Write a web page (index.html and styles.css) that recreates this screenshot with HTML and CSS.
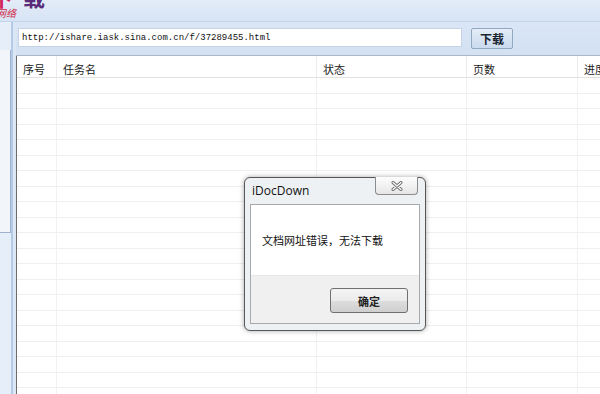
FILE: index.html
```html
<!DOCTYPE html>
<html>
<head>
  <meta charset="utf-8">
  <title>iDocDown</title>
  <link rel="stylesheet" href="styles.css">
</head>
<body>
  <div class="banner">
    <span class="logo-title"><span class="logo-xia">下</span><span class="logo-zai">载</span></span>
    <span class="logo-sub">网络</span>
  </div>
  <div class="main">
    <div class="sidebar">
      <div class="side-box"></div>
    </div>
    <div class="content">
      <div class="toolbar">
        <div class="url-input">http://ishare.iask.sina.com.cn/f/37289455.html</div>
        <button class="btn-download">下载</button>
      </div>
      <div class="grid">
        <div class="row head">
          <div class="c c1">序号</div>
          <div class="c c2">任务名</div>
          <div class="c c3">状态</div>
          <div class="c c4">页数</div>
          <div class="c c5">进度</div>
        </div>
        <div class="row"><div class="c c1"></div><div class="c c2"></div><div class="c c3"></div><div class="c c4"></div><div class="c c5"></div></div>
        <div class="row"><div class="c c1"></div><div class="c c2"></div><div class="c c3"></div><div class="c c4"></div><div class="c c5"></div></div>
        <div class="row"><div class="c c1"></div><div class="c c2"></div><div class="c c3"></div><div class="c c4"></div><div class="c c5"></div></div>
        <div class="row"><div class="c c1"></div><div class="c c2"></div><div class="c c3"></div><div class="c c4"></div><div class="c c5"></div></div>
        <div class="row"><div class="c c1"></div><div class="c c2"></div><div class="c c3"></div><div class="c c4"></div><div class="c c5"></div></div>
        <div class="row"><div class="c c1"></div><div class="c c2"></div><div class="c c3"></div><div class="c c4"></div><div class="c c5"></div></div>
        <div class="row"><div class="c c1"></div><div class="c c2"></div><div class="c c3"></div><div class="c c4"></div><div class="c c5"></div></div>
        <div class="row"><div class="c c1"></div><div class="c c2"></div><div class="c c3"></div><div class="c c4"></div><div class="c c5"></div></div>
        <div class="row"><div class="c c1"></div><div class="c c2"></div><div class="c c3"></div><div class="c c4"></div><div class="c c5"></div></div>
        <div class="row"><div class="c c1"></div><div class="c c2"></div><div class="c c3"></div><div class="c c4"></div><div class="c c5"></div></div>
        <div class="row"><div class="c c1"></div><div class="c c2"></div><div class="c c3"></div><div class="c c4"></div><div class="c c5"></div></div>
        <div class="row"><div class="c c1"></div><div class="c c2"></div><div class="c c3"></div><div class="c c4"></div><div class="c c5"></div></div>
        <div class="row"><div class="c c1"></div><div class="c c2"></div><div class="c c3"></div><div class="c c4"></div><div class="c c5"></div></div>
        <div class="row"><div class="c c1"></div><div class="c c2"></div><div class="c c3"></div><div class="c c4"></div><div class="c c5"></div></div>
        <div class="row"><div class="c c1"></div><div class="c c2"></div><div class="c c3"></div><div class="c c4"></div><div class="c c5"></div></div>
        <div class="row"><div class="c c1"></div><div class="c c2"></div><div class="c c3"></div><div class="c c4"></div><div class="c c5"></div></div>
        <div class="row"><div class="c c1"></div><div class="c c2"></div><div class="c c3"></div><div class="c c4"></div><div class="c c5"></div></div>
        <div class="row"><div class="c c1"></div><div class="c c2"></div><div class="c c3"></div><div class="c c4"></div><div class="c c5"></div></div>
        <div class="row"><div class="c c1"></div><div class="c c2"></div><div class="c c3"></div><div class="c c4"></div><div class="c c5"></div></div>
        <div class="row"><div class="c c1"></div><div class="c c2"></div><div class="c c3"></div><div class="c c4"></div><div class="c c5"></div></div>
        <div class="row"><div class="c c1"></div><div class="c c2"></div><div class="c c3"></div><div class="c c4"></div><div class="c c5"></div></div>
      </div>
    </div>
  </div>

  <!-- message box -->
  <div class="dialog">
    <div class="dialog-title">iDocDown</div>
    <div class="dialog-close">
      <svg width="12" height="10" viewBox="0 0 12 10">
        <path d="M2 1.5 L10 8.5 M10 1.5 L2 8.5" stroke="#6b6b6b" stroke-width="3" stroke-linecap="round" fill="none"/>
        <path d="M2 1.5 L10 8.5 M10 1.5 L2 8.5" stroke="#fff" stroke-width="1.2" stroke-linecap="round" fill="none"/>
      </svg>
    </div>
    <div class="dialog-body">
      <div class="dialog-msg">文档网址错误，无法下载</div>
      <div class="dialog-foot">
        <button class="btn-ok">确定</button>
      </div>
    </div>
  </div>
</body>
</html>
```

FILE: styles.css
```css
body {
  margin: 0;
  height: 394px;
  overflow: hidden;
  background-color: #d9e5f4;
  font-family: "Noto Sans CJK SC", "Noto Sans", sans-serif;
}

.banner {
  position: relative;
  height: 21px;
  overflow: hidden;
  background: linear-gradient(#e3ecf8, #d7e4f4);
  border-bottom: 1px solid #c3d4ea;
}

.logo-title {
  position: absolute;
  left: -9px;
  top: -19px;
  font-size: 22px;
  line-height: 30px;
  font-weight: bold;
  letter-spacing: 10px;
}

.logo-xia {
  color: #d0265c;
}

.logo-zai {
  color: #5a2a7a;
}

.logo-sub {
  position: absolute;
  left: -4px;
  top: 7px;
  font-size: 10px;
  line-height: 12px;
  font-style: italic;
  color: #d02a4a;
}

.main {
  display: flex;
  height: 372px;
}

.sidebar {
  flex-shrink: 0;
  width: 16px;
  background: linear-gradient(90deg, #e6eef9 0, #e6eef9 11px, #b4cbe7 11px, #b4cbe7 13px, #dce7f5 13px);
}

.side-box {
  width: 10px;
  height: 182px;
  margin-top: 28px;
  background-color: #f2f6fb;
  border-right: 1px solid #9fb2cb;
  border-bottom: 1px solid #9fb2cb;
}

.content {
  flex: 1;
  min-width: 0;
  display: flex;
  flex-direction: column;
}

.toolbar {
  display: flex;
  align-items: flex-start;
  height: 34px;
  padding: 6px 0 0 2px;
  box-sizing: border-box;
  background: linear-gradient(#dae6f6, #d3e1f3);
  border-bottom: 1px solid #a7b6c9;
}

.url-input {
  flex-shrink: 0;
  width: 444px;
  height: 19px;
  box-sizing: border-box;
  padding: 3px 0 0 3px;
  background-color: #fff;
  border: 1px solid #c5d3e4;
  font-family: "Liberation Mono", monospace;
  font-size: 9px;
  line-height: 12px;
  color: #111;
  white-space: nowrap;
}

.btn-download {
  flex-shrink: 0;
  width: 42px;
  height: 21px;
  margin-left: 9px;
  padding: 0;
  border: 1px solid #95a8c2;
  border-radius: 2px;
  background: linear-gradient(#e4edf8, #cbdaee);
  font-family: "Noto Sans CJK SC", sans-serif;
  font-size: 12px;
  font-weight: bold;
  color: #1c2633;
}

.grid {
  flex: 1;
  overflow: hidden;
  background-color: #fff;
  border-left: 1px solid #6d6d6d;
}

.row {
  display: flex;
  height: 15.5px;
  border-bottom: 1px solid #efefef;
  box-sizing: border-box;
}

.row.head {
  height: 22px;
  border-bottom: 1px solid #e2e2e2;
  font-size: 11px;
  color: #222;
}

.c {
  flex-shrink: 0;
  box-sizing: border-box;
  border-right: 1px solid #f1f1f1;
  white-space: nowrap;
  overflow: hidden;
}

.head .c {
  padding: 6px 0 0 6px;
  line-height: 14px;
  border-right-color: #ececec;
}

.c1 { width: 40px; }
.c2 { width: 260px; }
.c3 { width: 150px; }
.c4 { width: 111px; }
.c5 { flex: 1; border-right: none; }

.dialog {
  position: absolute;
  left: 244px;
  top: 177px;
  width: 182px;
  height: 154px;
  box-sizing: border-box;
  padding: 0 5px 6px 5px;
  background-color: #eef1f4;
  border: 1px solid #575757;
  border-radius: 6px;
  box-shadow: 0 0 5px rgba(0, 0, 0, 0.35);
  display: flex;
  flex-direction: column;
}

.dialog-title {
  height: 26px;
  padding-left: 2px;
  font-family: "Open Sans", "Noto Sans", sans-serif;
  font-size: 12px;
  line-height: 26px;
  color: #111;
}

.dialog-close {
  position: absolute;
  right: 7px;
  top: -1px;
  width: 43px;
  height: 18px;
  box-sizing: border-box;
  display: flex;
  align-items: center;
  justify-content: center;
  border: 1px solid #8c8c8c;
  border-top: none;
  border-radius: 0 0 4px 4px;
  background: linear-gradient(#fdfdfd, #e6e6e6);
}

.dialog-body {
  flex: 1;
  display: flex;
  flex-direction: column;
  border: 1px solid #a9a9a9;
  background-color: #fff;
}

.dialog-msg {
  height: 70px;
  padding-left: 11px;
  display: flex;
  align-items: center;
  font-size: 11px;
  color: #111;
}

.dialog-foot {
  flex: 1;
  display: flex;
  justify-content: flex-end;
  align-items: flex-start;
  padding: 12px 11px 0 0;
  background-color: #f0f0f0;
  border-top: 1px solid #e6e6e6;
}

.btn-ok {
  width: 78px;
  height: 25px;
  padding: 0;
  border: 1px solid #707070;
  border-radius: 3px;
  background: linear-gradient(#f4f4f4 0, #ebebeb 50%, #dddddd 51%, #cfcfcf 100%);
  font-family: "Noto Sans CJK SC", sans-serif;
  font-size: 11px;
  font-weight: bold;
  color: #222;
}
```
